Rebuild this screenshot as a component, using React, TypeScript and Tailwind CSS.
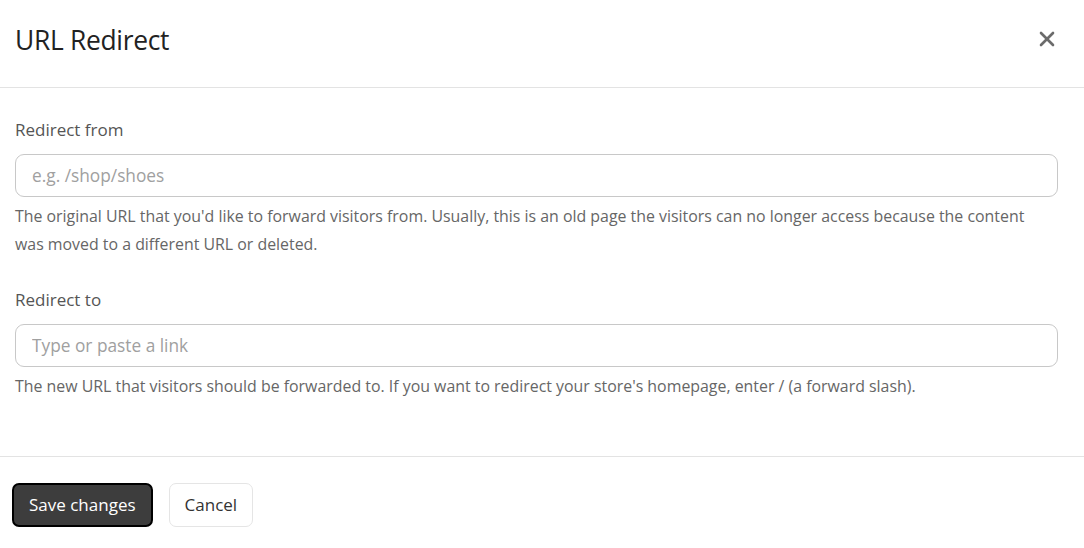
import { X } from 'lucide-react';

const fields = [
  {
    label: 'Redirect from',
    placeholder: 'e.g. /shop/shoes',
    help: "The original URL that you'd like to forward visitors from. Usually, this is an old page the visitors can no longer access because the content was moved to a different URL or deleted.",
  },
  {
    label: 'Redirect to',
    placeholder: 'Type or paste a link',
    help: "The new URL that visitors should be forwarded to. If you want to redirect your store's homepage, enter / (a forward slash).",
  },
];

export default function App() {
  return (
    <div className="w-[1084px] h-[548px] bg-white text-[#333] overflow-hidden" style={{ fontFamily: '"Open Sans", "Noto Sans", sans-serif' }}>
      {/* Header */}
      <div className="h-[88px] border-b border-[#e3e3e3] flex items-center justify-between pl-[15px] pr-[25px] pb-[5px]">
        <h2 className="text-[26.4px] text-[#222] tracking-[-0.3px]">URL Redirect</h2>
        <button className="text-[#6b6b6b] mb-[4px]">
          <X size={24} strokeWidth={2.6} />
        </button>
      </div>

      {/* Body */}
      <div className="px-[15px] pt-[28px] h-[369px] border-b border-[#e3e3e3] flex flex-col gap-[28px]">
        {fields.map((f) => (
          <div key={f.label}>
            <label className="block text-[17px] text-[#555] leading-[28px] mb-[10px]">{f.label}</label>
            <input
              className="w-[1043px] h-[43px] rounded-[9px] border border-[#c8c8c8] px-[16px] text-[17.3px] placeholder:text-[#a0a0a0] outline-none"
              placeholder={f.placeholder}
            />
            <p className="max-w-[1025px] text-[15.9px] text-[#666] leading-[28px] mt-[5px]">{f.help}</p>
          </div>
        ))}
      </div>

      {/* Footer */}
      <div className="flex items-center gap-[16px] pl-[12px] pt-[26px]">
        <button className="h-[44px] px-[15px] rounded-[7px] bg-[#3d3d3d] border-2 border-black text-white text-[17px]">
          Save changes
        </button>
        <button className="h-[44px] px-[15px] rounded-[7px] bg-white border border-[#e5e5e5] text-[#333] text-[17px]">
          Cancel
        </button>
      </div>
    </div>
  );
}
